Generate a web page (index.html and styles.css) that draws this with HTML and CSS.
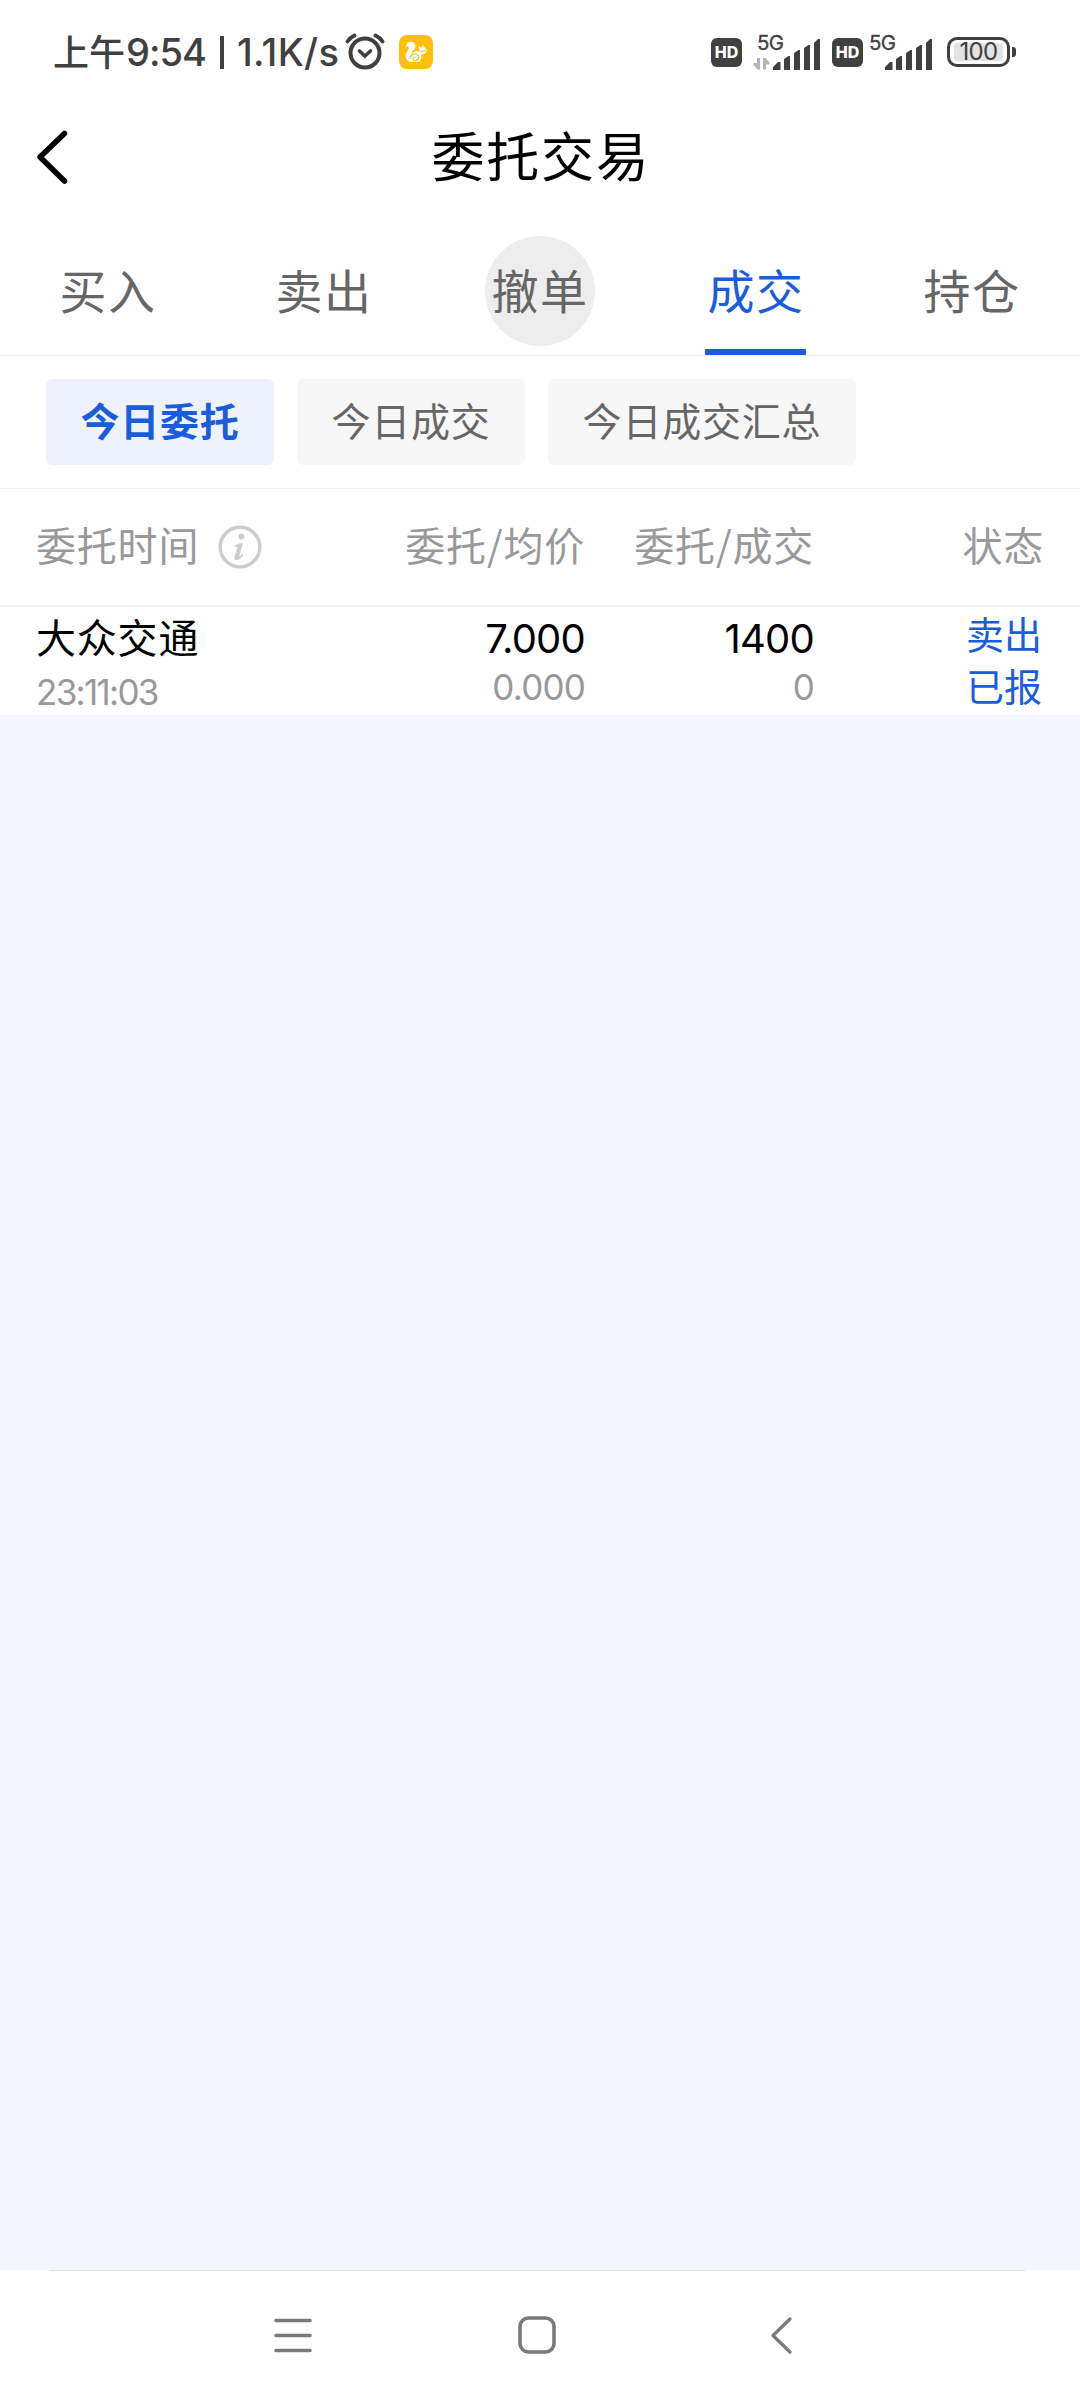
FILE: index.html
```html
<!DOCTYPE html>
<html lang="zh-CN">
<head>
    <meta charset="UTF-8">
    <meta name="viewport" content="width=device-width, initial-scale=1.0">
    <title>委托交易</title>
    <link rel="stylesheet" href="styles.css">
</head>
<body>
    <div class="status-bar">
        <span class="ampm">上午</span>
        <span class="clock">9:54</span>
        <span class="divider"></span>
        <span class="speed">1.1K/s</span>
        <svg class="alarm" width="40" height="40" viewBox="0 0 40 40" fill="none" stroke="#404040" stroke-linecap="round">
            <circle cx="20" cy="21" r="14.5" stroke-width="4"/>
            <path d="M14.500 19l5.300 5 5.700-5" stroke-width="3.600"/>
            <path d="M2.500 9.500Q5 5.500 9.500 3.500M30.500 3.500q4.500 2 7 6" stroke-width="3.800"/>
        </svg>
        <svg class="squirrel" width="34" height="34" viewBox="0 0 34 34">
            <rect width="34" height="34" rx="8" fill="#ffbf05"/>
            <path d="M6.500 12.500C7 8.500 9.500 6.500 12 6.700c3.500 0 5.300 3 4 6.300-1 2.300-3.800 3.500-3.500 6C14.500 15.800 18.500 15 20.800 17c.5-2-1.300-3-.8-6l2 1.700 2-2.700c.5 2 3.500 3.500 4 6-1 2.500-3.500 3.500-6 3.800 1 3 0 5.200-2 6.400l2.500.8H11c-4-1.500-5.500-6-3.500-9.500 1.500-2.500 3-4 2-6-1-1-2 .5-3 1z" fill="#fff"/>
            <path d="M11 24c-.5-4 3.300-6 6.500-4.800 3.500 1.500 2.500 6.300-1.200 6.500-3-.2-2.800-3.700-.5-3.700M21.500 17l5.500-1.800" fill="none" stroke="#ffbf05" stroke-width="1.200"/>
        </svg>

        <div class="status-right">
            <span class="hd">HD</span>
            <svg class="signal" width="70" height="48" viewBox="0 -4 70 48">
                <text x="6" y="18" class="net">5G</text>
                <path d="M9 26v11.500H6.500L2.500 33v-2H6v-5zM12 37.500V26h2.500l4 4.500v2H15v5z" fill="#b4b4b4"/>
                <path d="M22 38v-3l5-5h2.500v8zM33 38V27l4.500-3H39v14zM43 38V21l4.500-3H49v20zM53 38V16l4.500-3H59v25zM63 38V11l4-4h2v31z" fill="#404040"/>
            </svg>
            <span class="hd second">HD</span>
            <svg class="signal" width="70" height="48" viewBox="0 -4 70 48">
                <text x="6" y="18" class="net">5G</text>
                <path d="M22 38v-3l5-5h2.500v8zM33 38V27l4.500-3H39v14zM43 38V21l4.500-3H49v20zM53 38V16l4.500-3H59v25zM63 38V11l4-4h2v31z" fill="#404040"/>
            </svg>
            <span class="battery"><span class="level">100</span></span>
            <span class="battery-tip"></span>
        </div>
    </div>

    <header class="header">
        <svg class="back" width="40" height="60" viewBox="0 0 40 60" fill="none" stroke="#000" stroke-width="5.500" stroke-linecap="round" stroke-linejoin="round">
            <path d="M29.500 6.500L5 30l24.500 24"/>
        </svg>
        <h1>委托交易</h1>
    </header>

    <nav class="tabs">
        <a class="tab">买入</a>
        <a class="tab">卖出</a>
        <a class="tab pressed">撤单</a>
        <a class="tab active">成交</a>
        <a class="tab">持仓</a>
    </nav>

    <div class="filters">
        <button class="filter selected">今日委托</button>
        <button class="filter">今日成交</button>
        <button class="filter wide">今日成交汇总</button>
    </div>

    <div class="list-head">
        <div class="col-time">委托时间
            <svg class="info" width="44" height="44" viewBox="0 0 44 44">
                <circle cx="22" cy="22" r="19.800" fill="none" stroke="#ccc" stroke-width="3.500"/>
                <circle cx="23.500" cy="11.500" r="2.900" fill="#ccc"/>
                <path d="M16.500 20.500q5-2.500 8.500-2.800l-4 14q1.500 0 3.500-3l1 .8q-3.500 5.500-7 5.500-2.500 0-2-3l3-10.500q-1 0-2.500.5z" fill="#ccc"/>
            </svg>
        </div>
        <div class="col-price">委托/均价</div>
        <div class="col-amount">委托/成交</div>
        <div class="col-state">状态</div>
    </div>

    <div class="order">
        <div class="col-time">
            <div class="name">大众交通</div>
            <div class="sub time">23:11:03</div>
        </div>
        <div class="col-price">
            <div class="num">7.000</div>
            <div class="sub">0.000</div>
        </div>
        <div class="col-amount">
            <div class="num">1400</div>
            <div class="sub">0</div>
        </div>
        <div class="col-state">
            <div class="state">卖出</div>
            <div class="state">已报</div>
        </div>
    </div>

    <main class="blank"></main>

    <footer class="system-nav">
        <svg width="44" height="44" viewBox="0 0 44 44" stroke="#7a7a7a" stroke-width="3.500" stroke-linecap="round">
            <path d="M5 7.500h34M5 22.500h34M5 37.500h34"/>
        </svg>
        <svg width="44" height="44" viewBox="0 0 44 44" fill="none" stroke="#7a7a7a" stroke-width="3.600">
            <rect x="5" y="5" width="34" height="34" rx="8.500"/>
        </svg>
        <svg width="44" height="44" viewBox="0 0 44 44" fill="none" stroke="#7a7a7a" stroke-width="3.300" stroke-linecap="round" stroke-linejoin="round">
            <path d="M31 6L14 22.500 31 39"/>
        </svg>
    </footer>
</body>
</html>
```
FILE: styles.css
```css
* {
    box-sizing: border-box;
}
body {
    width: 1080px;
    height: 2400px;
    margin: 0;
    display: flex;
    flex-direction: column;
    background: #fff;
    color: #000;
    font-family: "Noto Sans CJK SC", sans-serif;
    overflow: hidden;
}

/* status bar */
.status-bar {
    height: 104px;
    padding: 0 64px 0 53px;
    display: flex;
    align-items: center;
    color: #404040;
}
.ampm {
    font-size: 36px;
    line-height: 50px;
    font-weight: 500;
    width: 73px;
    margin-top: -4px;
}
.clock,
.speed {
    font: 500 38px/50px Inter, sans-serif;
    letter-spacing: -1px;
    width: 94px;
    white-space: nowrap;
}
.divider {
    width: 4px;
    height: 33px;
    background: #404040;
}
.speed {
    width: 108px;
    margin-left: 13px;
    letter-spacing: 0.3px;
}
.squirrel {
    margin-left: 14px;
}
.status-right {
    margin-left: auto;
    display: flex;
    align-items: center;
}
.hd {
    width: 31px;
    height: 29px;
    border-radius: 6px;
    background: #404040;
    color: #fff;
    font: 800 16px/29px Inter, sans-serif;
    text-align: center;
}
.hd.second {
    margin-left: 11px;
}
.signal {
    margin-left: 9px;
}
.hd.second + .signal {
    margin-left: 0;
}
.net {
    font: 20.5px Inter, sans-serif;
    letter-spacing: -0.6px;
    fill: #404040;
    stroke: #404040;
    stroke-width: 0.3px;
}
.battery {
    width: 63px;
    height: 30px;
    margin-left: 14px;
    padding: 3px 4px;
    border: 3px solid #404040;
    border-radius: 10px;
}
.level {
    display: block;
    height: 18px;
    border-radius: 3px;
    background: #e3e3e3;
    font: 24px/18px Inter, sans-serif;
    letter-spacing: -0.6px;
    text-align: center;
}
.battery-tip {
    width: 4px;
    height: 10px;
    margin-left: 2px;
    border-radius: 0 3px 3px 0;
    background: #404040;
}

/* title */
.header {
    height: 132px;
    display: grid;
    grid-template-columns: 100px 1fr 100px;
    align-items: start;
}
.back {
    margin: 23px 0 0 35px;
}
h1 {
    margin: 10px 0 0;
    padding-left: 2px;
    font-size: 53px;
    line-height: 80px;
    font-weight: 400;
    letter-spacing: 1.8px;
    text-align: center;
}

/* tabs */
.tabs {
    height: 120px;
    display: flex;
    border-bottom: 1px solid #efefef;
}
.tab {
    width: 216px;
    height: 119px;
    display: flex;
    flex-direction: column;
    align-items: center;
    color: #666;
    font-size: 47px;
    line-height: 106px;
    letter-spacing: 1.5px;
}
.tab.pressed::before {
    content: "";
    width: 110px;
    height: 110px;
    margin-bottom: -110px;
    border-radius: 50%;
    background: #ededed;
}
.tab.active {
    color: #1a5cdb;
}
.tab.active::after {
    content: "";
    width: 101px;
    height: 6px;
    margin: 7px 1px 0 0;
    background: #1a5cdb;
}

/* filters */
.filters {
    height: 133px;
    padding: 23px 46px;
    display: flex;
    gap: 23px;
    border-bottom: 1px solid #f2f2f2;
}
.filter {
    width: 228px;
    height: 86px;
    padding: 0 0 6px;
    border: none;
    border-radius: 6px;
    background: #f7f7f7;
    color: #666;
    font-family: inherit;
    font-size: 39px;
    line-height: 80px;
    letter-spacing: 0.8px;
}
.filter.wide {
    width: 308px;
}
.filter.selected {
    background: #edf2fd;
    color: #1a5cdb;
    font-weight: 700;
}

/* order list */
.list-head,
.order {
    padding: 0 36px;
    display: grid;
    grid-template-columns: 280px 269px 229px 230px;
}
.list-head {
    height: 118px;
    border-bottom: 2px solid #f3f3f3;
    color: #999;
    font-size: 40px;
    line-height: 110px;
    letter-spacing: 0.8px;
}
.list-head .col-time {
    display: flex;
    height: 116px;
}
.info {
    margin: 36px 0 0 19px;
}
.col-price,
.col-amount,
.col-state {
    text-align: right;
}
.order {
    height: 108px;
}
.name {
    font-size: 40px;
    line-height: 58px;
    letter-spacing: 0.8px;
}
.num {
    margin-top: 5px;
    font: 40px/54px Inter, sans-serif;
    letter-spacing: -0.8px;
}
.sub {
    color: #999;
    font: 35px/42px Inter, sans-serif;
    letter-spacing: -0.8px;
}
.sub.time {
    margin-top: 6px;
    letter-spacing: -1.7px;
}
.state {
    padding-right: 2px;
    color: #1a5cdb;
    font-size: 38px;
    line-height: 52px;
}

.blank {
    flex: 1;
    background: #f3f6ff;
}

/* system navigation */
.system-nav {
    height: 130px;
    padding: 43px 0 0 271px;
    display: flex;
    gap: 200px;
    background: linear-gradient(#e4e4e6, #e4e4e6) 49px 0 / 976px 1px no-repeat #fff;
}
```
